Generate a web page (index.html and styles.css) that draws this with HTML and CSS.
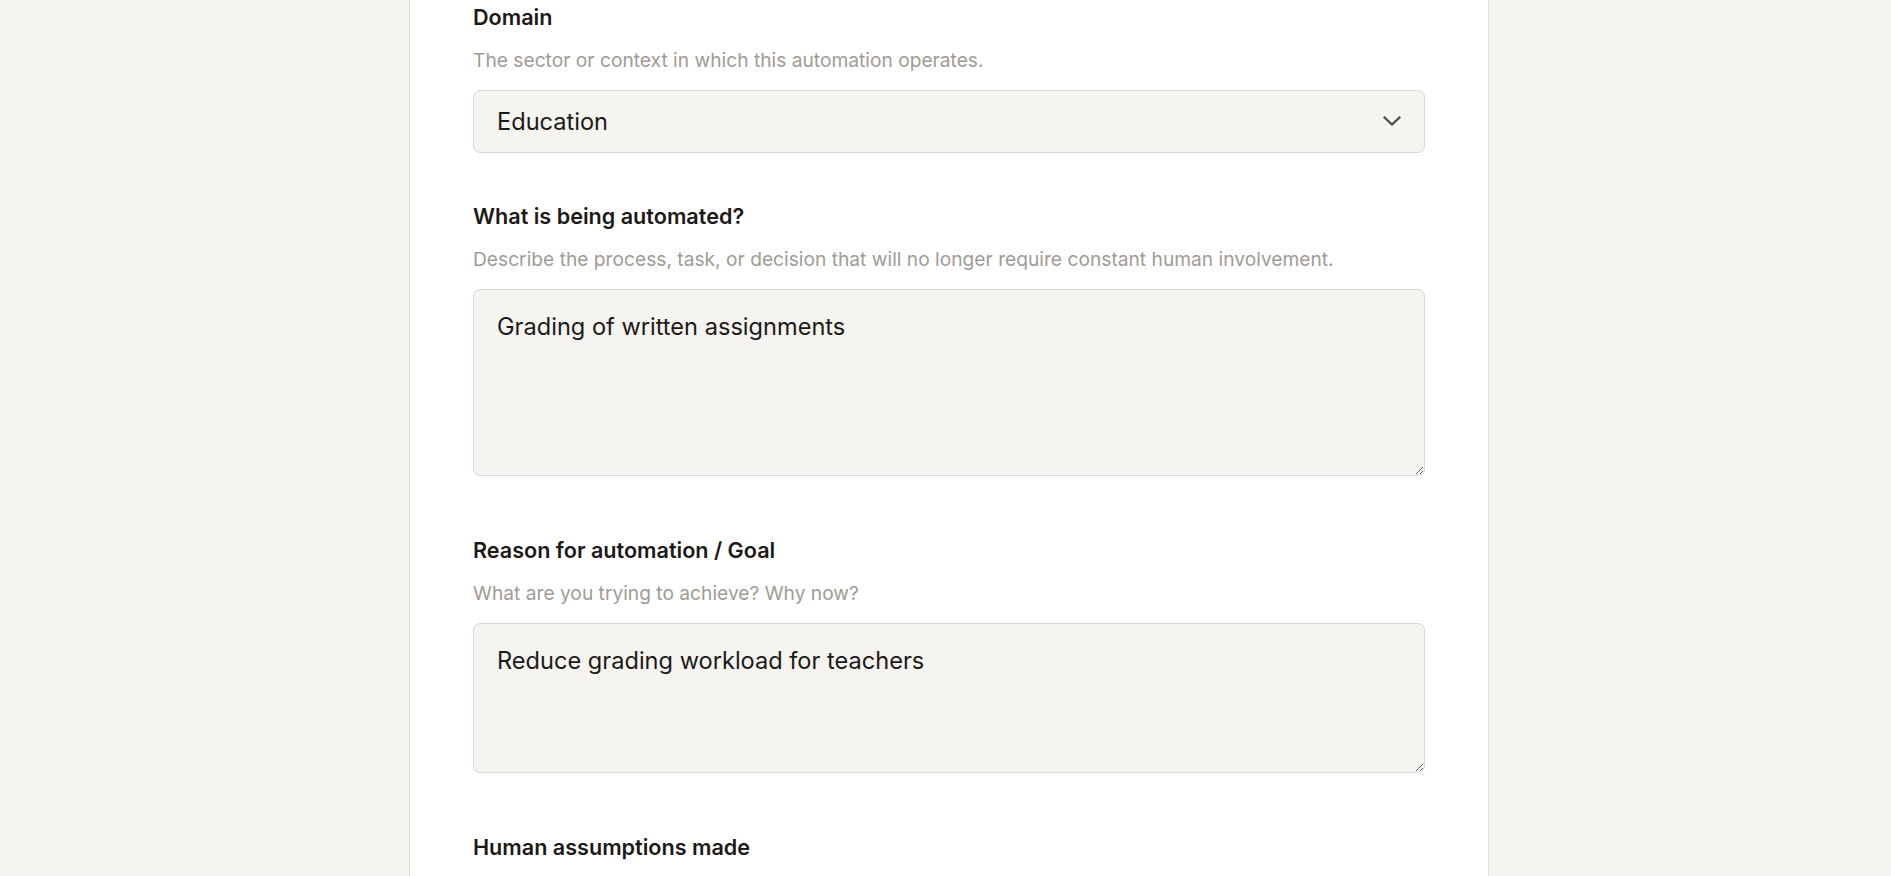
FILE: index.html
```html
<!DOCTYPE html>
<html lang="en">
<head>
<meta charset="utf-8">
<title>Automation form</title>
<link rel="stylesheet" href="styles.css">
</head>
<body>
<div class="page">
  <main class="card">
    <div class="field field-select">
      <label class="label" for="domain">Domain</label>
      <p class="desc">The sector or context in which this automation operates.</p>
      <div class="select-wrap">
        <select id="domain" class="control select">
          <option>Education</option>
        </select>
        <svg class="chevron" width="18" height="10" viewBox="0 0 18 10" aria-hidden="true"><path d="M1.5 1.5 L9 8.5 L16.5 1.5" fill="none" stroke="#4a4744" stroke-width="2.2" stroke-linecap="square"/></svg>
      </div>
    </div>
    <div class="field">
      <label class="label" for="what">What is being automated?</label>
      <p class="desc">Describe the process, task, or decision that will no longer require constant human involvement.</p>
      <textarea id="what" class="control area area-tall">Grading of written assignments</textarea>
    </div>
    <div class="field">
      <label class="label" for="why">Reason for automation / Goal</label>
      <p class="desc">What are you trying to achieve? Why now?</p>
      <textarea id="why" class="control area area-short">Reduce grading workload for teachers</textarea>
    </div>
    <div class="field">
      <label class="label" for="assume">Human assumptions made</label>
    </div>
  </main>
</div>
</body>
</html>
```
FILE: styles.css
```css
* { box-sizing: border-box; }
html, body { margin: 0; padding: 0; height: 100%; overflow: hidden; }
body {
  background: #f5f4f0;
  font-family: Inter, "Noto Sans", sans-serif;
  color: #1c1917;
}
.page {
  padding-left: 7px;
  height: 100%;
}
.card {
  width: 1080px;
  margin: 0 auto;
  min-height: 100%;
  background: #ffffff;
  border-left: 1px solid #e4e1db;
  border-right: 1px solid #e4e1db;
  padding: 3px 63px 0;
}
.field { display: flex; flex-direction: column; margin-bottom: 60px; }
.field-select { margin-bottom: 49px; }
.label {
  font-size: 21.6px;
  font-weight: 600;
  line-height: 28px;
  color: #1c1917;
  margin-bottom: 15px;
}
.desc {
  margin: 0 0 16px;
  font-size: 19.2px;
  line-height: 28px;
  color: #a09b94;
}
.control {
  width: 100%;
  background: #f5f4f0;
  border: 1px solid #dcd9d3;
  border-radius: 7px;
  font-family: Inter, "Noto Sans", sans-serif;
  font-size: 23.6px;
  color: #1c1917;
  outline: none;
}
.select-wrap { position: relative; }
.select {
  appearance: none;
  -webkit-appearance: none;
  height: 63px;
  padding: 0 60px 0 23px;
  display: block;
}
.chevron {
  position: absolute;
  right: 24px;
  top: 26px;
  pointer-events: none;
}
.area {
  display: block;
  padding: 19px 23px;
  line-height: 35px;
  resize: vertical;
}
.area-tall { height: 187px; }
.area-short { height: 150px; }
```
